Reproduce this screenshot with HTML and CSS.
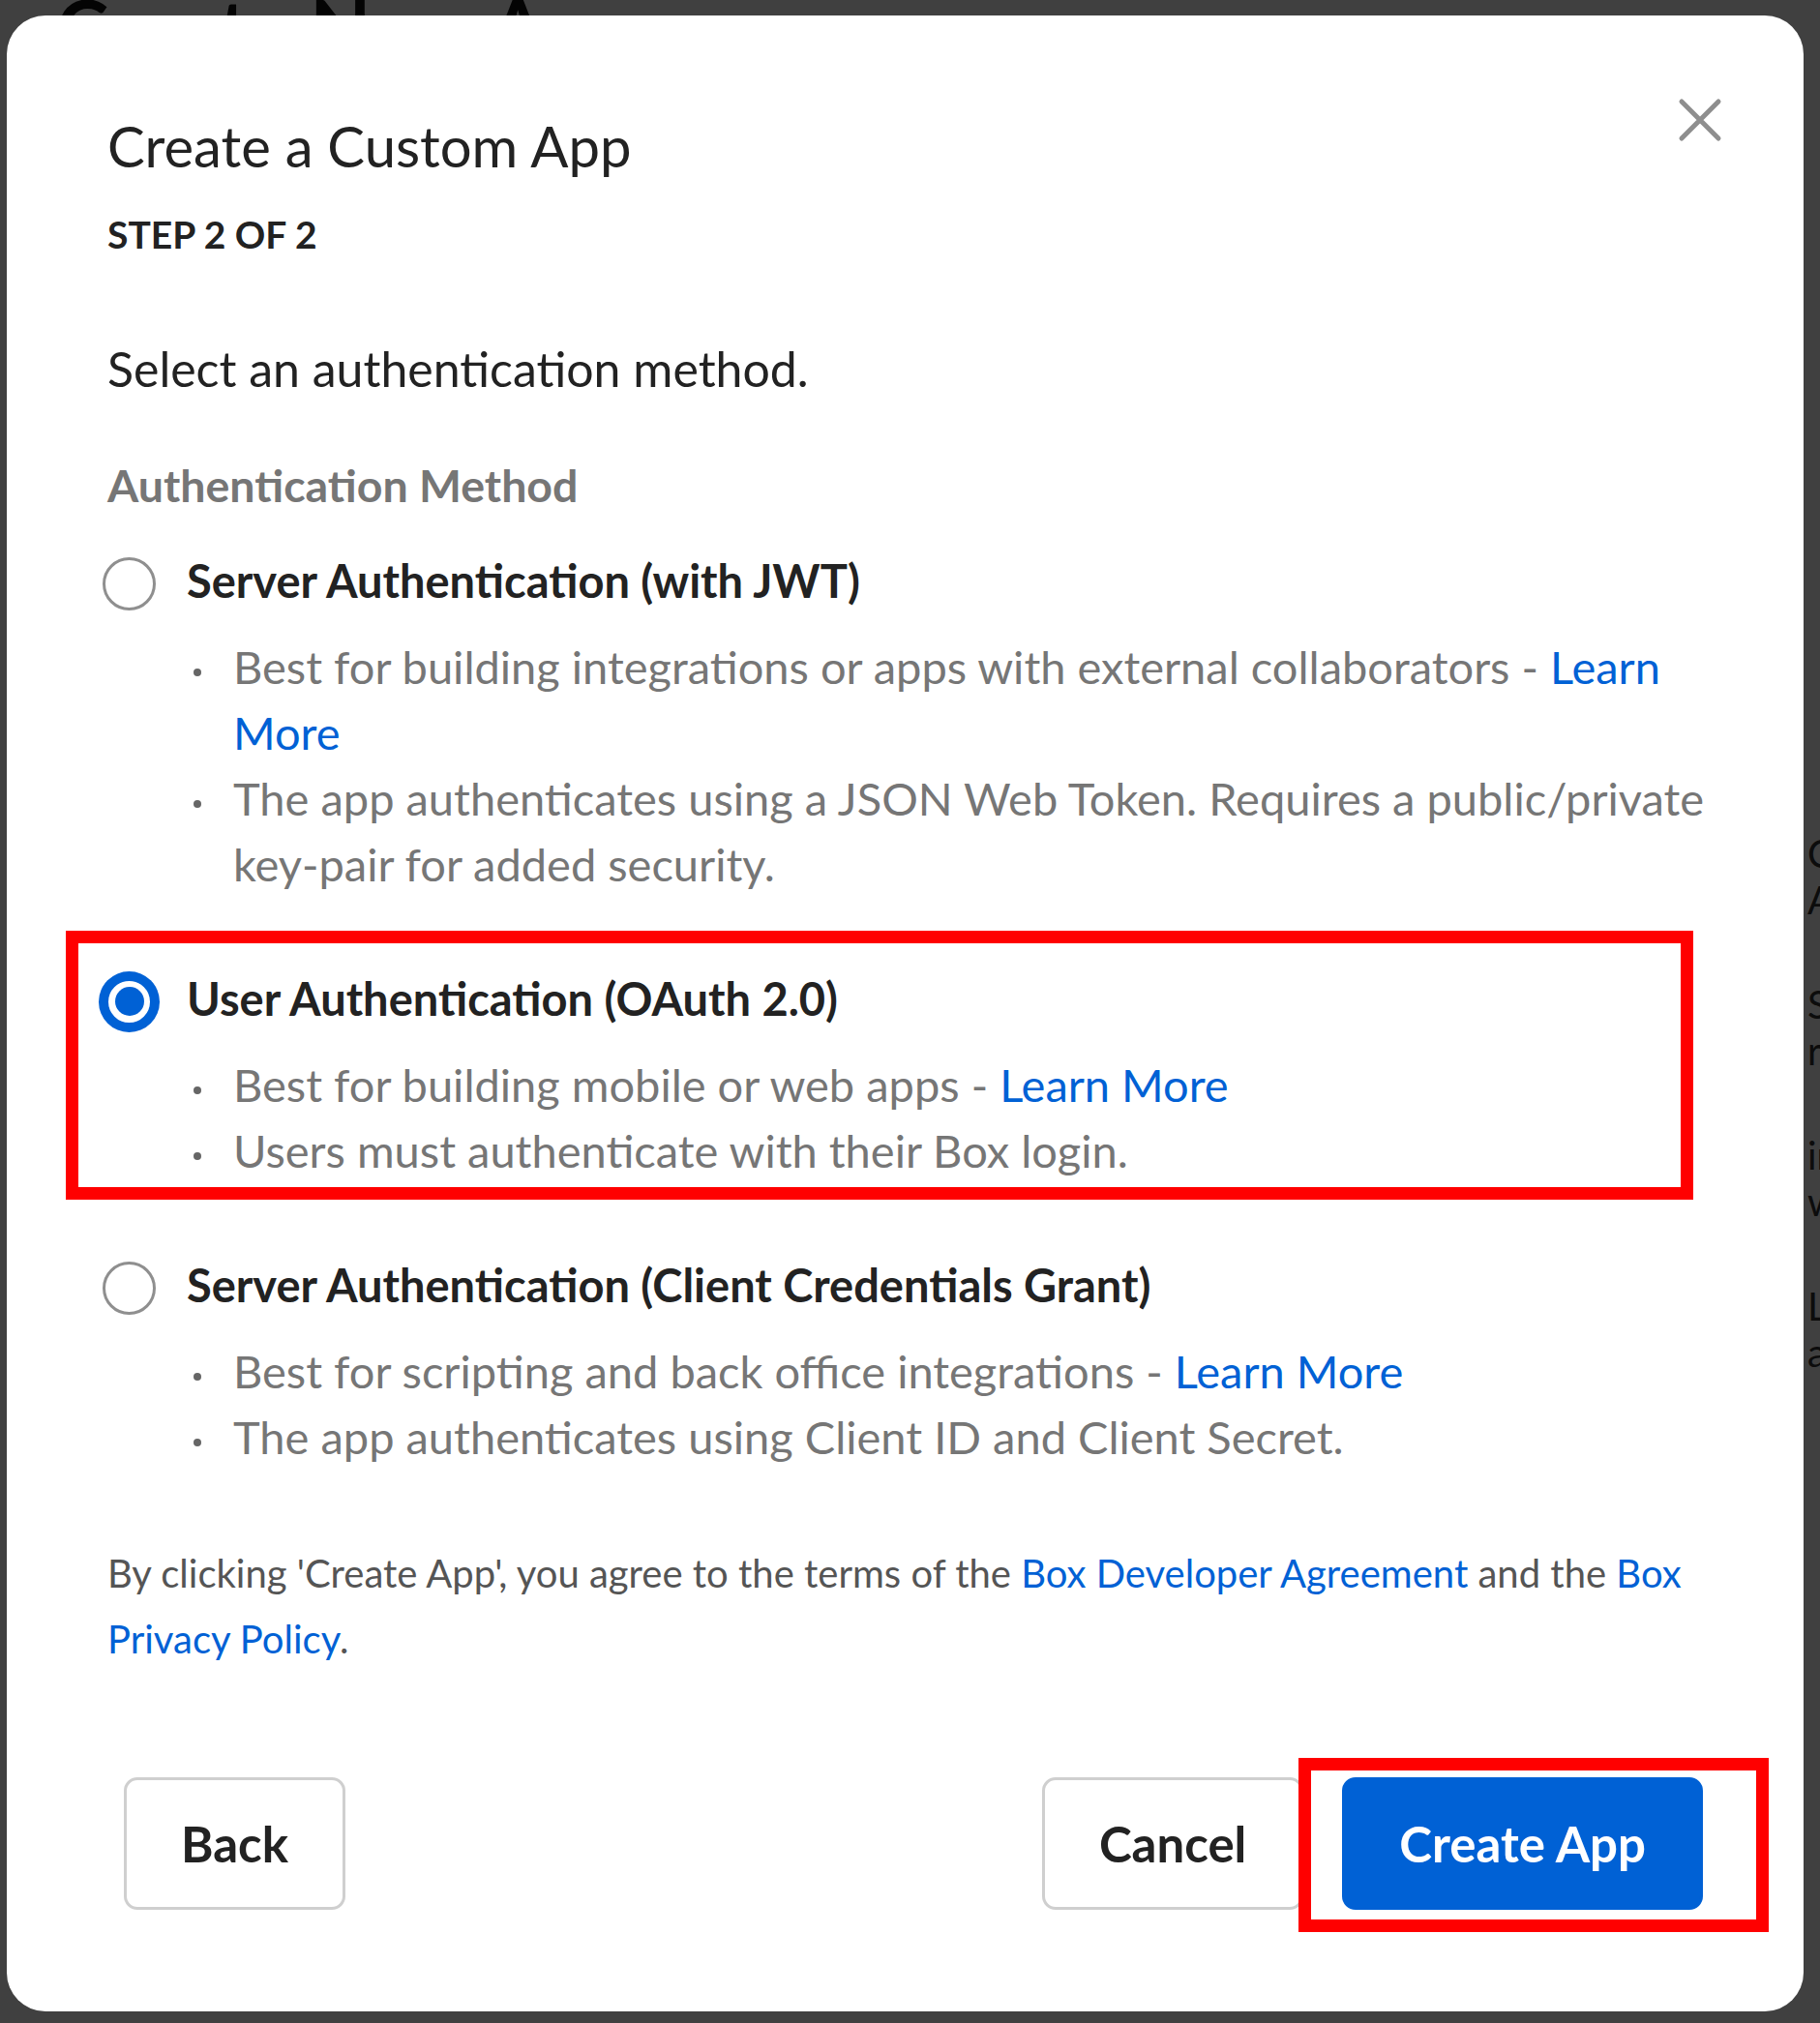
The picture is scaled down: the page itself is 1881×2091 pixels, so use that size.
FILE: index.html
```html
<!DOCTYPE html>
<html lang="en">
<head>
    <meta charset="UTF-8">
    <meta name="viewport" content="width=device-width, initial-scale=1.0">
    <title>Create a Custom App</title>
    <link rel="stylesheet" href="styles.css">
</head>
<body>
    <div class="page">
        <h1 class="page-title">Create New App</h1>
        <div class="page-side">
            <p>Custom App</p>
            <p>Secure, reliable and</p>
            <p>integrations with</p>
            <p>Learn more about</p>
        </div>
    </div>
    <div class="overlay">
        <div class="modal">
            <button class="close-btn" aria-label="Close">
                <svg width="46" height="46" viewBox="0 0 46 46">
                    <path d="M4 4 L42 42 M42 4 L4 42" stroke="#8e8e8e" stroke-width="5" stroke-linecap="round" fill="none"/>
                </svg>
            </button>

            <h2 class="modal-title">Create a Custom App</h2>
            <div class="step">STEP 2 OF 2</div>
            <p class="intro">Select an authentication method.</p>
            <div class="field-label">Authentication Method</div>

            <div class="options">
                <div class="option">
                    <label class="option-head">
                        <span class="radio"></span>
                        <span class="option-name">Server Authentication (with JWT)</span>
                    </label>
                    <ul class="option-notes">
                        <li>Best for building integrations or apps with external collaborators - <a href="#">Learn More</a></li>
                        <li>The app authenticates using a JSON Web Token. Requires a public/private key-pair for added security.</li>
                    </ul>
                </div>
                <div class="option">
                    <label class="option-head">
                        <span class="radio checked"></span>
                        <span class="option-name">User Authentication (OAuth 2.0)</span>
                    </label>
                    <ul class="option-notes">
                        <li>Best for building mobile or web apps - <a href="#">Learn More</a></li>
                        <li>Users must authenticate with their Box login.</li>
                    </ul>
                </div>
                <div class="option">
                    <label class="option-head">
                        <span class="radio"></span>
                        <span class="option-name">Server Authentication (Client Credentials Grant)</span>
                    </label>
                    <ul class="option-notes">
                        <li>Best for scripting and back office integrations - <a href="#">Learn More</a></li>
                        <li>The app authenticates using Client ID and Client Secret.</li>
                    </ul>
                </div>
            </div>

            <p class="terms">By clicking 'Create App', you agree to the terms of the <a href="#">Box Developer Agreement</a> and the <a href="#">Box Privacy Policy</a>.</p>

            <div class="modal-footer">
                <button class="btn btn-back">Back</button>
                <div class="footer-right">
                    <button class="btn">Cancel</button>
                    <button class="btn btn-primary">Create App</button>
                </div>
            </div>

            <!-- red highlight boxes drawn over the dialog -->
            <div class="annotation annotation-oauth"></div>
            <div class="annotation annotation-create"></div>
        </div>
    </div>
</body>
</html>
```

FILE: styles.css
```css
body {
    margin: 0;
    width: 1881px;
    height: 2091px;
    overflow: hidden;
    font-family: Lato, "Liberation Sans", sans-serif;
    background: #fff;
    color: #222;
}
.page {
    position: relative;
    height: 100%;
}
.page-title {
    margin: -22px 0 0;
    padding-left: 58px;
    font-size: 82px;
    font-weight: 700;
    line-height: 100px;
    color: #111;
}
.page-side {
    position: absolute;
    left: 1868px;
    top: 880px;
    font-size: 40px;
    color: #333;
}
.page-side p {
    margin: 0 0 60px;
}
.overlay {
    position: absolute;
    left: 0;
    top: 0;
    right: 0;
    bottom: 0;
    background: rgba(0, 0, 0, 0.75);
}
.modal {
    position: absolute;
    left: 7px;
    top: 16px;
    width: 1857px;
    box-sizing: border-box;
    padding: 99px 104px 105px;
    background: #fff;
    border-radius: 40px;
}
.close-btn {
    position: absolute;
    right: 84px;
    top: 85px;
    padding: 0;
    border: none;
    background: none;
    width: 46px;
    height: 46px;
}
.close-btn svg {
    display: block;
}
.modal-title {
    margin: 0;
    font-size: 58px;
    font-weight: 400;
    line-height: 72px;
    color: #222;
}
.step {
    margin-top: 31px;
    font-size: 39px;
    font-weight: 700;
    line-height: 48px;
    color: #222;
}
.intro {
    margin: 81px 0 0;
    font-size: 50px;
    line-height: 68px;
    color: #222;
}
.field-label {
    margin-top: 52px;
    font-size: 46.5px;
    font-weight: 700;
    line-height: 68px;
    color: #767676;
}
.options {
    margin-top: 31px;
}
.option + .option {
    margin-top: 71px;
}
.option-head {
    display: flex;
    align-items: center;
    height: 68px;
}
.radio {
    width: 55px;
    height: 55px;
    box-sizing: border-box;
    margin: 6px 32px 0 -5px;
    border: 3px solid #8f8f8f;
    border-radius: 50%;
    background: #fff;
    flex-shrink: 0;
}
.radio.checked {
    border: 6px solid #0061d5;
    box-shadow: 0 0 0 4px #0061d5;
    display: flex;
    align-items: center;
    justify-content: center;
}
.radio.checked::after {
    content: "";
    width: 30px;
    height: 30px;
    border-radius: 50%;
    background: #0061d5;
}
.option-name {
    font-size: 47px;
    font-weight: 700;
    line-height: 68px;
    color: #222;
}
.option-notes {
    margin: 21px -30px 0 0;
    padding: 0 0 0 130px;
    list-style: none;
}
.option-notes li {
    font-size: 47px;
    line-height: 68px;
    color: #767676;
}
.option-notes li::before {
    content: "";
    display: inline-block;
    width: 8px;
    height: 8px;
    margin: 0 33px 0 -41px;
    border-radius: 50%;
    background: #666;
    vertical-align: middle;
}
a {
    color: #0061d5;
    text-decoration: none;
}
.terms {
    margin: 73px 0 0;
    font-size: 40px;
    line-height: 68px;
    color: #555;
}
.modal-footer {
    margin-top: 109px;
    display: flex;
    justify-content: space-between;
    align-items: center;
}
.footer-right {
    display: flex;
    gap: 40px;
}
.btn {
    height: 137px;
    padding: 0 56px;
    border: 3px solid #cfcfcf;
    border-radius: 14px;
    background: #fff;
    font-family: Lato, "Liberation Sans", sans-serif;
    font-size: 51px;
    font-weight: 700;
    color: #222;
}
.btn-back {
    margin-left: 17px;
}
.btn-primary {
    background: #0061d5;
    border-color: #0061d5;
    color: #fff;
}
.annotation {
    position: absolute;
    box-sizing: border-box;
    border: 13px solid #ff0000;
}
.annotation-oauth {
    left: 61px;
    top: 946px;
    width: 1682px;
    height: 278px;
}
.annotation-create {
    left: 1335px;
    top: 1801px;
    width: 486px;
    height: 180px;
}
```
